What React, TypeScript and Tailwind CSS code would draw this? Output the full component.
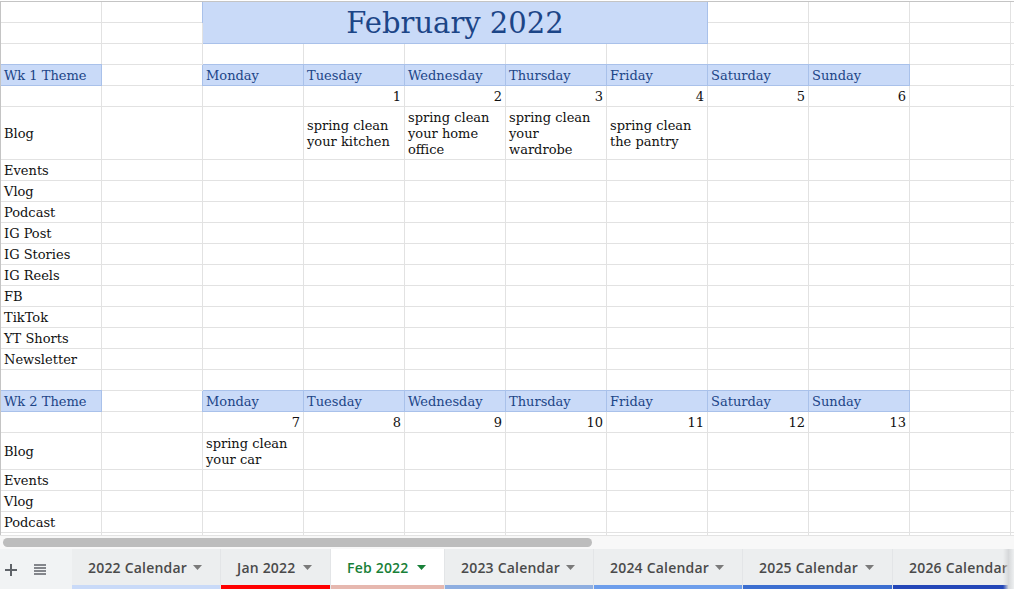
import React from 'react';

const DAYS = ['Monday', 'Tuesday', 'Wednesday', 'Thursday', 'Friday', 'Saturday', 'Sunday'];
const CHANNELS = ['Events', 'Vlog', 'Podcast', 'IG Post', 'IG Stories', 'IG Reels', 'FB', 'TikTok', 'YT Shorts', 'Newsletter'];

const WEEKS = [
  {
    theme: 'Wk 1 Theme',
    dates: ['', '1', '2', '3', '4', '5', '6'],
    blog: [[], ['spring clean', 'your kitchen'], ['spring clean', 'your home', 'office'], ['spring clean', 'your', 'wardrobe'], ['spring clean', 'the pantry'], [], []],
    channels: CHANNELS,
  },
  {
    theme: 'Wk 2 Theme',
    dates: ['7', '8', '9', '10', '11', '12', '13'],
    blog: [['spring clean', 'your car'], [], [], [], [], [], []],
    channels: ['Events', 'Vlog', 'Podcast', ''],
  },
];

const TABS = [
  { label: '2022 Calendar', w: 'w-[149px]', bar: 'bg-[#c9daf8]' },
  { label: 'Jan 2022', w: 'w-[110px]', bar: 'bg-[#ff0000]' },
  { label: 'Feb 2022', w: 'w-[114px]', bar: 'bg-[#e6b8af]', active: true },
  { label: '2023 Calendar', w: 'w-[149px]', bar: 'bg-[#8eaee0]' },
  { label: '2024 Calendar', w: 'w-[149px]', bar: 'bg-[#6d9eeb]' },
  { label: '2025 Calendar', w: 'w-[150px]', bar: 'bg-[#3c6fd0]' },
  { label: '2026 Calendar', w: 'w-[150px]', bar: 'bg-[#2447b8]' },
];

type CellProps = {
  children?: React.ReactNode;
  blue?: boolean;
  right?: boolean;
  edge?: boolean;
};

function Cell({ children, blue, right, edge }: CellProps) {
  return (
    <div
      className={[
        'flex items-center overflow-hidden whitespace-nowrap border-b px-[3px] pt-px',
        edge ? '' : 'border-r',
        right ? 'justify-end' : '',
        blue
          ? 'bg-[#c9daf8] border-[#a9c1ea] text-[#1c4587] shadow-[0_-1px_0_#a9c1ea,-1px_0_0_#a9c1ea]'
          : 'border-[#e2e2e2] text-[#111]',
      ].join(' ')}
    >
      {children}
    </div>
  );
}

function Lines({ lines }: { lines: string[] }) {
  return (
    <div className="flex flex-col">
      {lines.map((l) => (
        <span key={l}>{l}</span>
      ))}
    </div>
  );
}

function EmptyRow({ label }: { label?: string }) {
  return (
    <>
      <Cell>{label}</Cell>
      {Array.from({ length: 9 }).map((_, i) => (
        <Cell key={i} />
      ))}
      <Cell edge />
    </>
  );
}

function Week({ week }: { week: (typeof WEEKS)[number] }) {
  return (
    <>
      <Cell blue>{week.theme}</Cell>
      <Cell />
      {DAYS.map((d) => (
        <Cell key={d} blue>
          {d}
        </Cell>
      ))}
      <Cell />
      <Cell edge />

      <Cell />
      <Cell />
      {week.dates.map((d, i) => (
        <Cell key={i} right>
          {d}
        </Cell>
      ))}
      <Cell />
      <Cell edge />

      <Cell>Blog</Cell>
      <Cell />
      {week.blog.map((lines, i) => (
        <Cell key={i}>{lines.length > 0 && <Lines lines={lines} />}</Cell>
      ))}
      <Cell />
      <Cell edge />

      {week.channels.map((c, i) => (
        <EmptyRow key={i} label={c} />
      ))}
    </>
  );
}

function Sheet() {
  return (
    <div className="pt-px">
      <div className="h-[534px] overflow-hidden border-l border-t border-[#c4c4c4]">
        <div className="grid grid-cols-[repeat(10,101px)_1fr] grid-rows-[21px_21px_21px_21px_21px_53px_repeat(11,21px)_21px_21px_37px_repeat(4,21px)] font-['DejaVu_Serif',serif] text-[13px] leading-4">
          <Cell />
          <Cell />
          <div className="col-span-5 row-span-2 flex items-center justify-center border-b border-r border-[#a9c1ea] bg-[#c9daf8] pt-px text-[29px] leading-none text-[#1c4587] shadow-[-1px_0_0_#a9c1ea]">
            February 2022
          </div>
          <Cell />
          <Cell />
          <Cell />
          <Cell edge />
          <Cell />
          <Cell />
          <Cell />
          <Cell />
          <Cell />
          <Cell edge />
          <EmptyRow />

          <Week week={WEEKS[0]} />
          <EmptyRow />
          <Week week={WEEKS[1]} />
        </div>
      </div>
    </div>
  );
}

function Caret({ active }: { active?: boolean }) {
  return (
    <svg width="9" height="5" viewBox="0 0 9 5" className="shrink-0">
      <path d="M0 0h9L4.5 5z" fill={active ? '#188038' : '#7a7a7a'} />
    </svg>
  );
}

function TabBar() {
  return (
    <div className="flex h-[40px] bg-[#f1f3f4] font-['Open_Sans',sans-serif] text-[14px] font-semibold tracking-[0.2px]">
      <div className="flex w-[72px] shrink-0 items-center gap-[17px] pl-[5px] pt-[1px]">
        <svg width="12" height="12" viewBox="0 0 12 12">
          <path d="M6 0v12M0 6h12" stroke="#5f6368" strokeWidth="2" />
        </svg>
        <svg width="12" height="11" viewBox="0 0 12 11">
          <path d="M0 1h12M0 4h12M0 7h12M0 10h12" stroke="#5f6368" strokeWidth="1.6" />
        </svg>
      </div>
      <div className="relative flex min-w-0 flex-1 overflow-hidden">
        {TABS.map((t) => (
          <div
            key={t.label}
            className={[
              'flex shrink-0 flex-col border-r border-[#e3e5e7]',
              t.w,
              t.active ? 'bg-white' : 'bg-[#eceeef]',
            ].join(' ')}
          >
            <div
              className={[
                'flex flex-1 items-center justify-between pl-[16px] pr-[18px] pt-px whitespace-nowrap',
                t.active ? 'text-[#188038]' : 'text-[#4a4a4a]',
              ].join(' ')}
            >
              <span>{t.label}</span>
              <Caret active={t.active} />
            </div>
            <div className={['h-[4px]', t.bar].join(' ')} />
          </div>
        ))}
        <div className="absolute right-0 top-0 h-full w-[11px] bg-gradient-to-r from-transparent via-[#d6d8da] to-[#eef0f1]" />
      </div>
    </div>
  );
}

export default function App() {
  return (
    <div className="h-[589px] w-[1014px] overflow-hidden bg-white">
      <Sheet />
      <div className="h-[14px] border-t border-[#e3e3e3] bg-[#f8f8f8] pl-[3px] pt-[2px]">
        <div className="h-[9px] w-[589px] rounded-full bg-[#bdbdbd]" />
      </div>
      <TabBar />
    </div>
  );
}
